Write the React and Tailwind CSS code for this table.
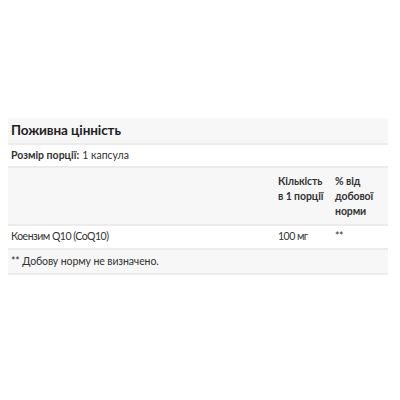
export default function App() {
  return (
    <div className="w-[400px] h-[400px] bg-white pt-[118px] px-[8px]" style={{ fontFamily: "Lato, 'Open Sans', sans-serif" }}>
      <div className="w-[380px] text-[#333]">
        <div className="bg-[#f7f7f7] border-b-2 border-[#ececec] h-[27px] flex items-center pl-[3px]">
          <span className="text-[13.5px] font-bold text-[#222] tracking-[-0.1px]">Поживна цінність</span>
        </div>
        <div className="border-b-2 border-[#ececec] h-[23px] flex items-center pl-[3px] text-[10.5px]">
          <span className="font-bold">Розмір порції:</span>
          <span className="ml-[3px]">1 капсула</span>
        </div>
        <div className="bg-[#f7f7f7] border-b-2 border-[#ececec] grid grid-cols-[270px_57px_53px] pt-[6px] pb-[5px] text-[10.5px] font-bold leading-[15px] tracking-[-0.1px]">
          <div></div>
          <div>Кількість<br />в 1 порції</div>
          <div>% від<br />добової<br />норми</div>
        </div>
        <div className="border-b-2 border-[#ececec] h-[24px] grid grid-cols-[270px_57px_53px] items-center text-[10.5px] tracking-[-0.5px]">
          <div className="pl-[3px]">Коензим Q10 (CoQ10)</div>
          <div>100 мг</div>
          <div>**</div>
        </div>
        <div className="bg-[#f7f7f7] border-b-2 border-[#ececec] h-[25px] flex items-center pl-[3px] text-[10.5px] tracking-[-0.1px]">
          ** Добову норму не визначено.
        </div>
      </div>
    </div>
  );
}
